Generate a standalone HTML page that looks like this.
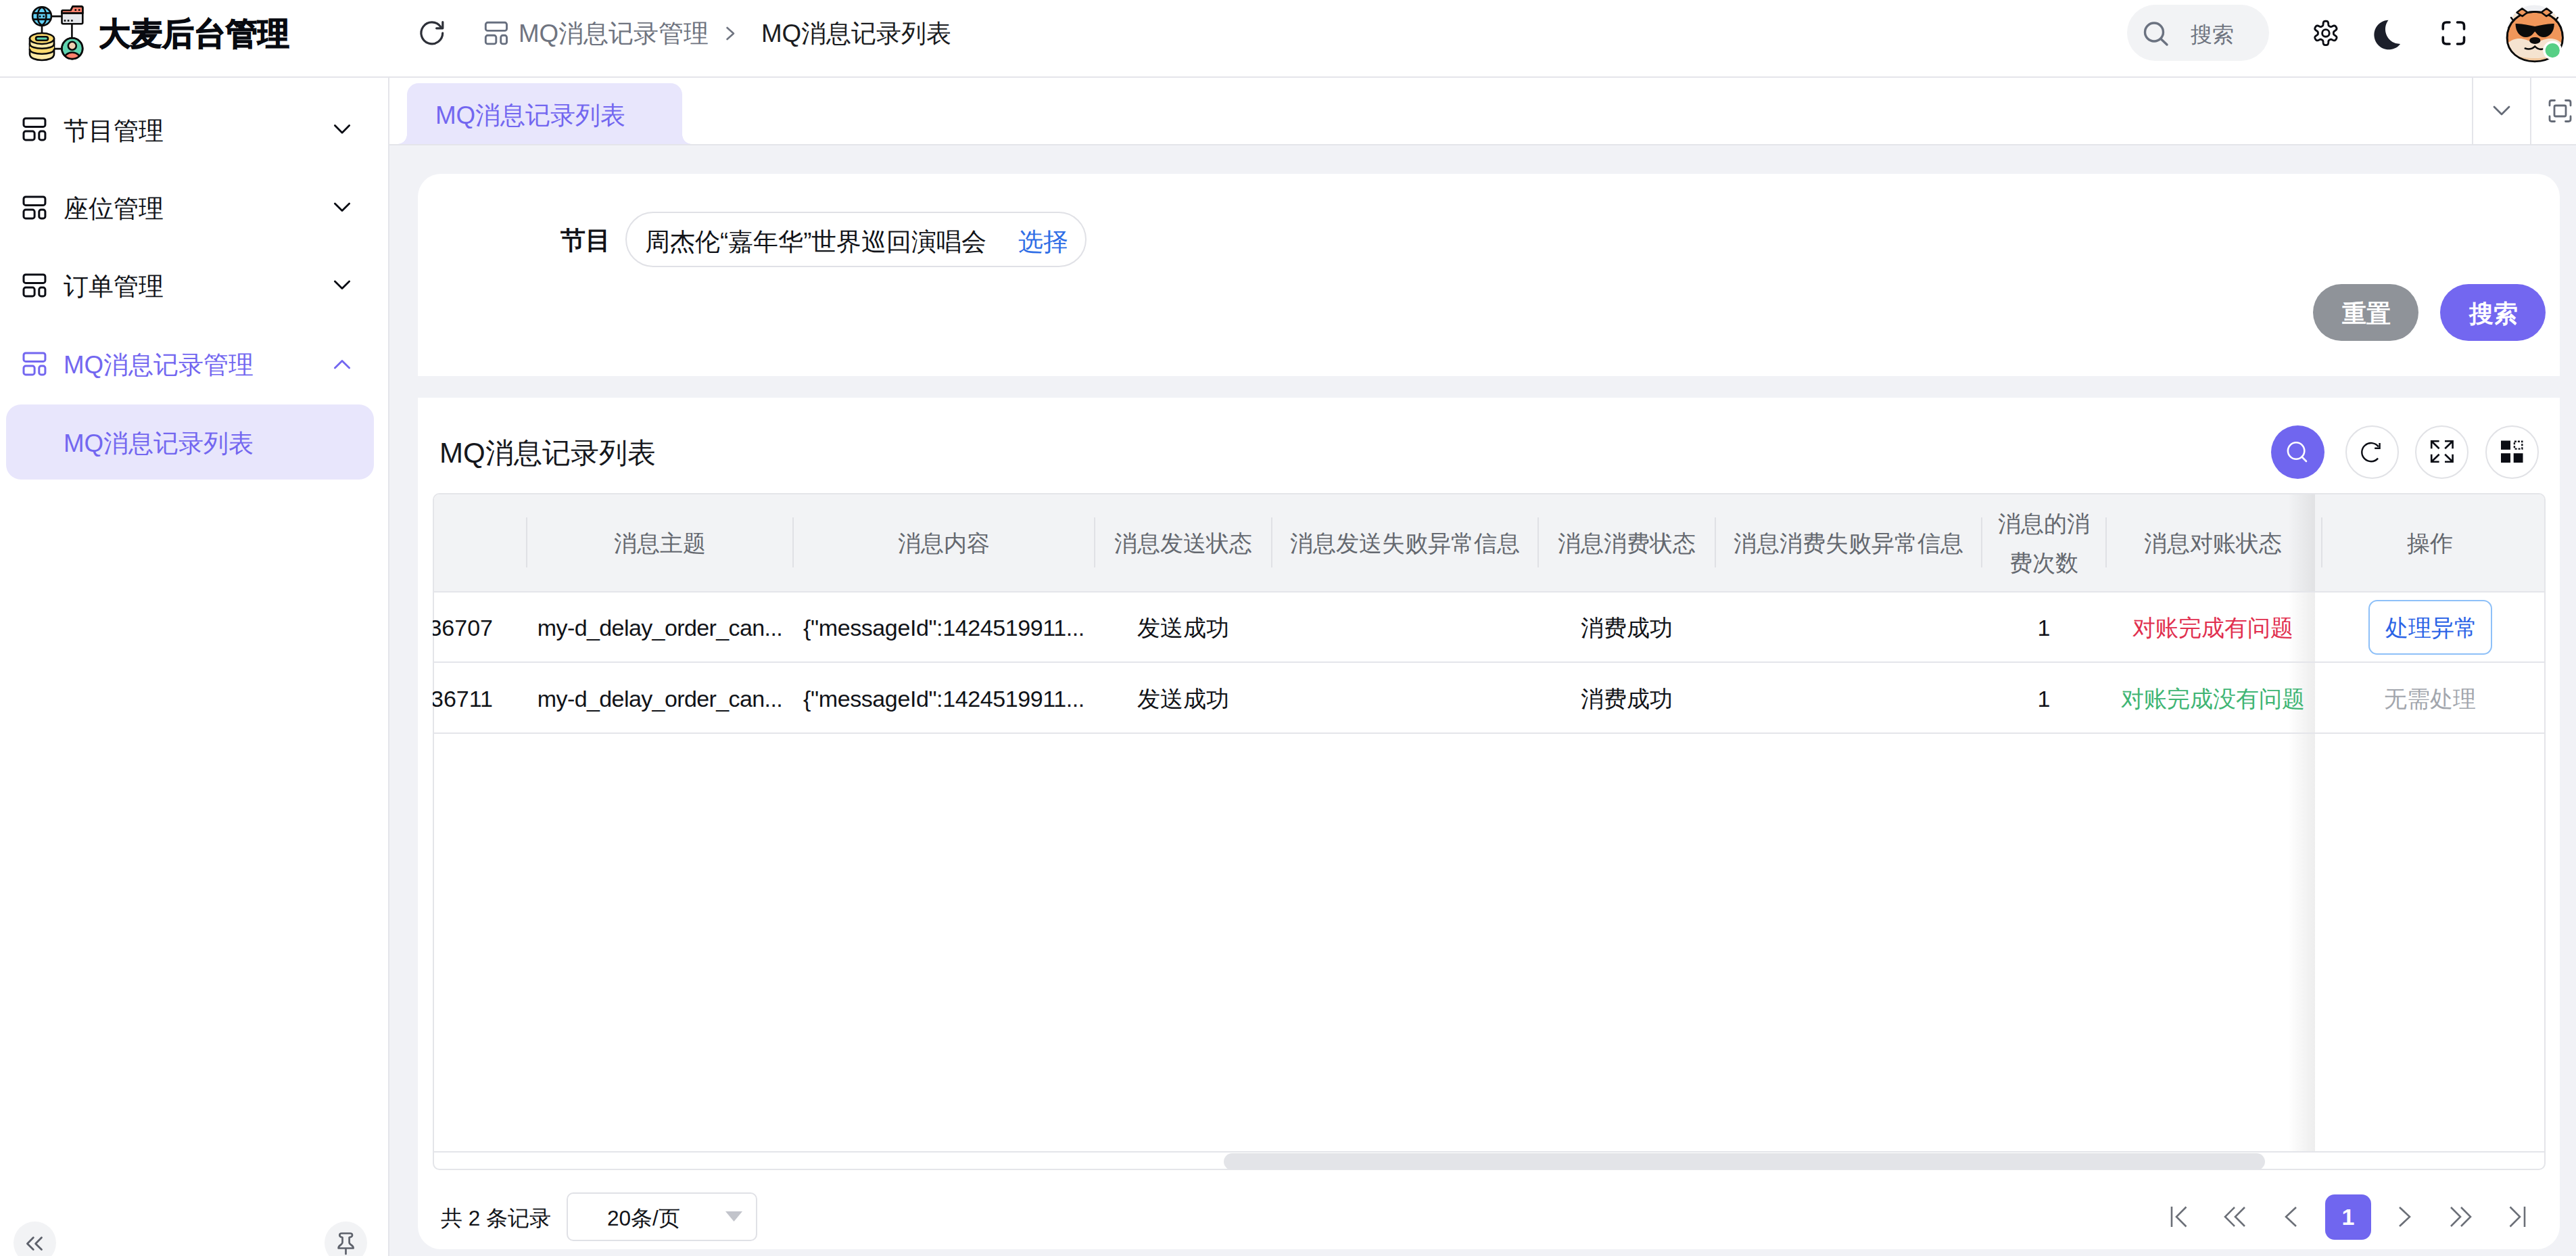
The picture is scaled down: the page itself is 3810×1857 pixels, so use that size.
<!DOCTYPE html>
<html><head><meta charset="utf-8">
<style>
*{box-sizing:border-box;margin:0;padding:0}
html,body{width:3810px;height:1857px;overflow:hidden;background:#f1f2f6;font-family:"Liberation Sans",sans-serif;color:#111318}
body{position:relative}
.a{position:absolute;white-space:nowrap}
svg{display:block}
.bg{background:#fff}
.line{background:#e4e5ea}
.t37{font-size:36.75px;line-height:44px}
.t34{font-size:34px;line-height:40px}
.pri{color:#7367f0}
#ov{position:absolute;left:0;top:0;width:3810px;height:1857px;pointer-events:none}
</style></head><body>
<!-- frame -->
<div class="a bg" style="left:0;top:0;width:3810px;height:113px"></div>
<div class="a line" style="left:0;top:113px;width:3810px;height:2px"></div>
<div class="a bg" style="left:0;top:115px;width:574px;height:1742px"></div>
<div class="a line" style="left:574px;top:115px;width:2px;height:1742px"></div>
<div class="a bg" style="left:576px;top:115px;width:3234px;height:98px"></div>
<div class="a line" style="left:576px;top:213px;width:3234px;height:2px"></div>

<!-- HEADER TEXT -->
<div class="a" style="left:146px;top:23px;font-size:47px;line-height:54px;font-weight:bold;color:#080a10;-webkit-text-stroke:1.3px #080a10">大麦后台管理</div>
<div class="a t37" style="left:767px;top:28px;color:#6f7480">MQ消息记录管理</div>
<div class="a t37" style="left:1126px;top:28px;color:#1a1c21">MQ消息记录列表</div>
<div class="a" style="left:3146px;top:7px;width:210px;height:83px;border-radius:42px;background:#f2f3f5"></div>
<div class="a" style="left:3240px;top:31px;font-size:31.5px;line-height:40px;color:#6f7480">搜索</div>

<!-- SIDER -->
<div class="a t37" style="left:94px;top:172px">节目管理</div>
<div class="a t37" style="left:94px;top:287px">座位管理</div>
<div class="a t37" style="left:94px;top:402px">订单管理</div>
<div class="a t37 pri" style="left:94px;top:518px">MQ消息记录管理</div>
<div class="a" style="left:9px;top:598px;width:544px;height:111px;border-radius:22px;background:#e8e6fc"></div>
<div class="a t37 pri" style="left:94px;top:634px">MQ消息记录列表</div>
<div class="a" style="left:20px;top:1806px;width:63px;height:63px;border-radius:50%;background:#f2f3f5"></div>
<div class="a" style="left:480px;top:1806px;width:63px;height:63px;border-radius:50%;background:#f2f3f5"></div>

<!-- TABS -->
<div class="a" style="left:602px;top:123px;width:407px;height:90px;border-radius:17px 17px 0 0;background:#e8e6fc"></div>
<div class="a" style="left:588px;top:199px;width:14px;height:14px;background:radial-gradient(circle at 0 0,transparent 13.5px,#e8e6fc 14px)"></div>
<div class="a" style="left:1009px;top:199px;width:14px;height:14px;background:radial-gradient(circle at 100% 0,transparent 13.5px,#e8e6fc 14px)"></div>
<div class="a t37 pri" style="left:644px;top:149px">MQ消息记录列表</div>
<div class="a line" style="left:3656px;top:115px;width:2px;height:98px"></div>
<div class="a line" style="left:3742px;top:115px;width:2px;height:98px"></div>

<!-- CARD 1 -->
<div class="a bg" style="left:618px;top:257px;width:3168px;height:299px;border-radius:34px 34px 0 0"></div>
<div class="a t37" style="left:829px;top:334px;font-weight:bold">节目</div>
<div class="a" style="left:925px;top:313px;width:682px;height:82px;border:2px solid #e0e1e6;border-radius:41px;background:#fff"></div>
<div class="a t37" style="left:954px;top:336px">周杰伦“嘉年华”世界巡回演唱会</div>
<div class="a t37" style="left:1506px;top:336px;color:#2f6ee6">选择</div>
<div class="a" style="left:3421px;top:420px;width:156px;height:84px;border-radius:42px;background:#8f9399"></div>
<div class="a" style="left:3464px;top:442px;font-size:35.5px;line-height:44px;color:#fff;font-weight:bold">重置</div>
<div class="a" style="left:3609px;top:420px;width:156px;height:84px;border-radius:42px;background:#7367f0"></div>
<div class="a" style="left:3652px;top:442px;font-size:35.5px;line-height:44px;color:#fff;font-weight:bold">搜索</div>

<!-- CARD 2 -->
<div class="a bg" style="left:618px;top:588px;width:3168px;height:1259px;border-radius:0 0 34px 34px"></div>

<div class="a" style="left:650px;top:645px;font-size:42px;line-height:50px;color:#15171c">MQ消息记录列表</div>
<div class="a" style="left:3359px;top:629px;width:79px;height:79px;border-radius:50%;background:#7066ef"></div>
<div class="a" style="left:3469px;top:629px;width:79px;height:79px;border-radius:50%;border:2px solid #e1e2e6"></div>
<div class="a" style="left:3572px;top:629px;width:79px;height:79px;border-radius:50%;border:2px solid #e1e2e6"></div>
<div class="a" style="left:3676px;top:629px;width:79px;height:79px;border-radius:50%;border:2px solid #e1e2e6"></div>

<!-- TABLE -->
<div class="a" id="tbl" style="left:640px;top:729px;width:3125px;height:1001px;border:2px solid #e4e5e9;border-radius:10px;overflow:hidden;background:#fff">
  <div class="a" style="left:0;top:0;width:3121px;height:143px;background:#f2f3f5"></div>
  <div class="a" style="left:2782px;top:0;width:339px;height:143px;background:#f2f3f5"></div>
  <div class="a bg" style="left:2782px;top:145px;width:339px;height:102px"></div>
  <div class="a bg" style="left:2782px;top:249px;width:339px;height:103px"></div>
  <div class="a bg" style="left:2782px;top:354px;width:339px;height:617px"></div>
  <div class="a" style="left:2742px;top:0;width:40px;height:971px;background:linear-gradient(to right,rgba(0,0,0,0),rgba(0,0,0,0.07))"></div>
  <div class="a line" style="left:0;top:143px;width:3121px;height:2px"></div>
  <div class="a line" style="left:0;top:247px;width:3121px;height:2px"></div>
  <div class="a line" style="left:0;top:352px;width:3121px;height:2px"></div>
  <div class="a line" style="left:0;top:971px;width:3121px;height:2px"></div>
  <div class="a" style="left:1168px;top:974px;width:1540px;height:25px;border-radius:12.5px;background:#e3e4e8"></div>
</div>
<div class="a" style="left:778px;top:765px;width:2px;height:74px;background:#e0e1e5"></div>
<div class="a" style="left:1172px;top:765px;width:2px;height:74px;background:#e0e1e5"></div>
<div class="a" style="left:1618px;top:765px;width:2px;height:74px;background:#e0e1e5"></div>
<div class="a" style="left:1880px;top:765px;width:2px;height:74px;background:#e0e1e5"></div>
<div class="a" style="left:2274px;top:765px;width:2px;height:74px;background:#e0e1e5"></div>
<div class="a" style="left:2536px;top:765px;width:2px;height:74px;background:#e0e1e5"></div>
<div class="a" style="left:2930px;top:765px;width:2px;height:74px;background:#e0e1e5"></div>
<div class="a" style="left:3114px;top:765px;width:2px;height:74px;background:#e0e1e5"></div>
<div class="a" style="left:3433px;top:765px;width:2px;height:74px;background:#e0e1e5"></div>
<div class="a t34" style="left:976px;top:783px;width:600px;margin-left:-300px;text-align:center;color:#64686f">消息主题</div>
<div class="a t34" style="left:1396px;top:783px;width:600px;margin-left:-300px;text-align:center;color:#64686f">消息内容</div>
<div class="a t34" style="left:1750px;top:783px;width:600px;margin-left:-300px;text-align:center;color:#64686f">消息发送状态</div>
<div class="a t34" style="left:2078px;top:783px;width:600px;margin-left:-300px;text-align:center;color:#64686f">消息发送失败异常信息</div>
<div class="a t34" style="left:2406px;top:783px;width:600px;margin-left:-300px;text-align:center;color:#64686f">消息消费状态</div>
<div class="a t34" style="left:2734px;top:783px;width:600px;margin-left:-300px;text-align:center;color:#64686f">消息消费失败异常信息</div>
<div class="a t34" style="left:3273px;top:783px;width:600px;margin-left:-300px;text-align:center;color:#64686f">消息对账状态</div>
<div class="a t34" style="left:3594px;top:783px;width:600px;margin-left:-300px;text-align:center;color:#64686f">操作</div>
<div class="a t34" style="left:3023px;top:745px;width:600px;margin-left:-300px;text-align:center;color:#64686f;line-height:58px">消息的消<br>费次数</div>
<div class="a t34" style="left:640px;top:908px;width:89px;overflow:hidden;direction:rtl;text-align:right">36707</div>
<div class="a t34" style="left:976px;top:908px;width:600px;margin-left:-300px;text-align:center;letter-spacing:-0.6px">my-d_delay_order_can...</div>
<div class="a t34" style="left:1396px;top:908px;width:600px;margin-left:-300px;text-align:center;letter-spacing:-0.4px">{"messageId":1424519911...</div>
<div class="a t34" style="left:1750px;top:908px;width:600px;margin-left:-300px;text-align:center">发送成功</div>
<div class="a t34" style="left:2406px;top:908px;width:600px;margin-left:-300px;text-align:center">消费成功</div>
<div class="a t34" style="left:3023px;top:908px;width:600px;margin-left:-300px;text-align:center">1</div>
<div class="a t34" style="left:640px;top:1013px;width:89px;overflow:hidden;direction:rtl;text-align:right">36711</div>
<div class="a t34" style="left:976px;top:1013px;width:600px;margin-left:-300px;text-align:center;letter-spacing:-0.6px">my-d_delay_order_can...</div>
<div class="a t34" style="left:1396px;top:1013px;width:600px;margin-left:-300px;text-align:center;letter-spacing:-0.4px">{"messageId":1424519911...</div>
<div class="a t34" style="left:1750px;top:1013px;width:600px;margin-left:-300px;text-align:center">发送成功</div>
<div class="a t34" style="left:2406px;top:1013px;width:600px;margin-left:-300px;text-align:center">消费成功</div>
<div class="a t34" style="left:3023px;top:1013px;width:600px;margin-left:-300px;text-align:center">1</div>
<div class="a t34" style="left:3273px;top:908px;width:600px;margin-left:-300px;text-align:center;color:#e1304f">对账完成有问题</div>
<div class="a t34" style="left:3273px;top:1013px;width:600px;margin-left:-300px;text-align:center;color:#3fb574">对账完成没有问题</div>
<div class="a" style="left:3503px;top:887px;width:183px;height:81px;border:2px solid #8ec0f8;border-radius:13px"></div>
<div class="a t34" style="left:3596px;top:908px;width:600px;margin-left:-300px;text-align:center;color:#2b63e6">处理异常</div>
<div class="a t34" style="left:3594px;top:1013px;width:600px;margin-left:-300px;text-align:center;color:#a2a6ad">无需处理</div>
<div class="a" style="left:652px;top:1781px;font-size:31.5px;line-height:40px">共 2 条记录</div>
<div class="a" style="left:838px;top:1763px;width:282px;height:72px;border:2px solid #e0e1e6;border-radius:10px"></div>
<div class="a" style="left:898px;top:1781px;font-size:31.5px;line-height:40px">20条/页</div>
<div class="a" style="left:3439px;top:1766px;width:68px;height:67px;border-radius:14px;background:#7066ef"></div>
<div class="a" style="left:3439px;top:1779px;width:68px;text-align:center;font-size:34px;line-height:40px;color:#fff;font-weight:bold">1</div>


<svg id="ov" viewBox="0 0 3810 1857">
<!-- LOGO -->
<g transform="translate(38,4)" stroke="#0b0b0b" stroke-width="2.6" stroke-linejoin="round" stroke-linecap="round">
  <line x1="37" y1="20.1" x2="54" y2="20.1"/>
  <line x1="24" y1="34" x2="24" y2="45"/>
  <line x1="68.4" y1="31" x2="68.4" y2="53"/>
  <line x1="42" y1="68.1" x2="53" y2="68.1"/>
  <circle cx="24" cy="20.1" r="13.9" fill="#62cff4"/>
  <path d="M24 6.5 C15.5 11.5 15.5 28.5 24 33.7 C32.5 28.5 32.5 11.5 24 6.5Z" fill="none"/>
  <line x1="11" y1="15.4" x2="37" y2="15.4"/>
  <line x1="11" y1="24.6" x2="37" y2="24.6"/>
  <rect x="19.8" y="18.9" width="2.6" height="2.6" fill="#0b0b0b" stroke="none"/>
  <rect x="25.3" y="18.9" width="2.6" height="2.6" fill="#0b0b0b" stroke="none"/>
  <path d="M55.5 11.3 H66.6 L69.5 5.6 H82.3 Q84.3 5.6 84.3 7.6 V29.3 Q84.3 31.3 82.3 31.3 H55.5 Q53.5 31.3 53.5 29.3 V13.3 Q53.5 11.3 55.5 11.3Z" fill="#e5e7eb"/>
  <path d="M53.5 15.4 V13.3 Q53.5 11.3 55.5 11.3 H66.6 L69.5 5.6 H82.3 Q84.3 5.6 84.3 7.6 V15.4Z" fill="#ff826e"/>
  <line x1="53.5" y1="15.4" x2="84.3" y2="15.4"/>
  <rect x="72.5" y="9.4" width="2.6" height="2.6" fill="#0b0b0b" stroke="none"/>
  <rect x="77.9" y="9.4" width="2.6" height="2.6" fill="#0b0b0b" stroke="none"/>
  <rect x="56.7" y="25.2" width="2.6" height="2.6" fill="#0b0b0b" stroke="none"/>
  <rect x="61.8" y="25.2" width="2.6" height="2.6" fill="#0b0b0b" stroke="none"/>
  <rect x="67.1" y="25.2" width="2.6" height="2.6" fill="#0b0b0b" stroke="none"/>
  <path d="M6 53 V76 C6 88 42 88 42 76 V53Z" fill="#fde9a6"/>
  <path d="M6 61 C6 70 42 70 42 61 V69 C42 78 6 78 6 69Z" fill="#fcd96e" stroke="none"/>
  <path d="M6 61 C6 70 42 70 42 61 M6 69 C6 78 42 78 42 69" fill="none"/>
  <ellipse cx="24" cy="53" rx="18" ry="8" fill="#fcd96e"/>
  <rect x="15" y="50.2" width="18" height="5.6" rx="2.8" fill="#5fd4b0"/>
  <circle cx="68.8" cy="67.7" r="15.4" fill="#5fd4b0"/>
  <clipPath id="lgc"><circle cx="68.8" cy="67.7" r="15.4"/></clipPath>
  <ellipse cx="68.8" cy="84.5" rx="12.5" ry="11" fill="#ff826e" clip-path="url(#lgc)"/>
  <circle cx="68.8" cy="67.7" r="15.4" fill="none"/>
  <circle cx="68.8" cy="63.8" r="6" fill="#f0d0b2"/>
</g>
<!-- header refresh -->
<path d="M654.7 48.8 A15.9 15.9 0 1 1 651.8 39.7" fill="none" stroke="#2d3038" stroke-width="3.2" stroke-linecap="round"/>
<path d="M654.8 32.6 V41.8 H645.6" fill="none" stroke="#2d3038" stroke-width="3.2" stroke-linecap="round" stroke-linejoin="round"/>
<!-- breadcrumb icon -->
<g fill="none" stroke="#676f7f" stroke-width="2.9">
  <rect x="718.3" y="33.3" width="31.2" height="12.1" rx="3"/>
  <rect x="718.3" y="52.3" width="15.5" height="12.6" rx="3"/>
  <rect x="740.7" y="52.3" width="8.8" height="12.6" rx="3"/>
</g>
<path d="M1075.5 41 L1085 49.5 L1075.5 58" fill="none" stroke="#6f7480" stroke-width="2.6" stroke-linecap="round" stroke-linejoin="round"/>
<!-- search pill icon -->
<circle cx="3186" cy="47.5" r="13.5" fill="none" stroke="#6b7280" stroke-width="3.4"/>
<line x1="3196" y1="57.5" x2="3205" y2="66" stroke="#6b7280" stroke-width="3.4" stroke-linecap="round"/>
<!-- gear -->
<path d="M3439.90 31.20 L3440.36 31.21 L3440.83 31.25 L3441.28 31.32 L3441.74 31.42 L3442.18 31.59 L3442.60 31.86 L3442.98 32.27 L3443.30 32.89 L3443.54 33.76 L3443.68 34.80 L3443.77 35.84 L3443.87 36.70 L3444.00 37.32 L3444.18 37.75 L3444.39 38.05 L3444.63 38.28 L3444.88 38.46 L3445.13 38.63 L3445.39 38.79 L3445.65 38.94 L3445.91 39.09 L3446.18 39.23 L3446.45 39.37 L3446.73 39.49 L3447.05 39.58 L3447.42 39.62 L3447.88 39.56 L3448.49 39.36 L3449.28 39.02 L3450.22 38.58 L3451.20 38.18 L3452.06 37.95 L3452.76 37.91 L3453.31 38.04 L3453.75 38.27 L3454.12 38.57 L3454.44 38.91 L3454.72 39.27 L3454.99 39.65 L3455.23 40.05 L3455.45 40.46 L3455.65 40.88 L3455.82 41.31 L3455.95 41.75 L3456.03 42.22 L3456.01 42.72 L3455.85 43.25 L3455.47 43.84 L3454.83 44.48 L3454.00 45.12 L3453.15 45.72 L3452.45 46.23 L3451.98 46.66 L3451.70 47.03 L3451.54 47.37 L3451.46 47.68 L3451.43 47.99 L3451.41 48.30 L3451.40 48.60 L3451.40 48.90 L3451.40 49.20 L3451.41 49.50 L3451.43 49.81 L3451.46 50.12 L3451.54 50.43 L3451.70 50.77 L3451.98 51.14 L3452.45 51.57 L3453.15 52.08 L3454.00 52.68 L3454.83 53.32 L3455.47 53.96 L3455.85 54.55 L3456.01 55.08 L3456.03 55.58 L3455.95 56.05 L3455.82 56.49 L3455.65 56.92 L3455.45 57.34 L3455.23 57.75 L3454.99 58.15 L3454.72 58.53 L3454.44 58.89 L3454.12 59.23 L3453.75 59.53 L3453.31 59.76 L3452.76 59.89 L3452.06 59.85 L3451.20 59.62 L3450.22 59.22 L3449.28 58.78 L3448.49 58.44 L3447.88 58.24 L3447.42 58.18 L3447.05 58.22 L3446.73 58.31 L3446.45 58.43 L3446.18 58.57 L3445.91 58.71 L3445.65 58.86 L3445.39 59.01 L3445.13 59.17 L3444.88 59.34 L3444.63 59.52 L3444.39 59.75 L3444.18 60.05 L3444.00 60.48 L3443.87 61.10 L3443.77 61.96 L3443.68 63.00 L3443.54 64.04 L3443.30 64.91 L3442.98 65.53 L3442.60 65.94 L3442.18 66.21 L3441.74 66.38 L3441.28 66.48 L3440.83 66.55 L3440.36 66.59 L3439.90 66.60 L3439.44 66.59 L3438.97 66.55 L3438.52 66.48 L3438.06 66.38 L3437.62 66.21 L3437.20 65.94 L3436.82 65.53 L3436.50 64.91 L3436.26 64.04 L3436.12 63.00 L3436.03 61.96 L3435.93 61.10 L3435.80 60.48 L3435.62 60.05 L3435.41 59.75 L3435.17 59.52 L3434.92 59.34 L3434.67 59.17 L3434.41 59.01 L3434.15 58.86 L3433.89 58.71 L3433.62 58.57 L3433.35 58.43 L3433.07 58.31 L3432.75 58.22 L3432.38 58.18 L3431.92 58.24 L3431.31 58.44 L3430.52 58.78 L3429.58 59.22 L3428.60 59.62 L3427.74 59.85 L3427.04 59.89 L3426.49 59.76 L3426.05 59.53 L3425.68 59.23 L3425.36 58.89 L3425.08 58.53 L3424.81 58.15 L3424.57 57.75 L3424.35 57.34 L3424.15 56.92 L3423.98 56.49 L3423.85 56.05 L3423.77 55.58 L3423.79 55.08 L3423.95 54.55 L3424.33 53.96 L3424.97 53.32 L3425.80 52.68 L3426.65 52.08 L3427.35 51.57 L3427.82 51.14 L3428.10 50.77 L3428.26 50.43 L3428.34 50.12 L3428.37 49.81 L3428.39 49.50 L3428.40 49.20 L3428.40 48.90 L3428.40 48.60 L3428.39 48.30 L3428.37 47.99 L3428.34 47.68 L3428.26 47.37 L3428.10 47.03 L3427.82 46.66 L3427.35 46.23 L3426.65 45.72 L3425.80 45.12 L3424.97 44.48 L3424.33 43.84 L3423.95 43.25 L3423.79 42.72 L3423.77 42.22 L3423.85 41.75 L3423.98 41.31 L3424.15 40.88 L3424.35 40.46 L3424.57 40.05 L3424.81 39.65 L3425.08 39.27 L3425.36 38.91 L3425.68 38.57 L3426.05 38.27 L3426.49 38.04 L3427.04 37.91 L3427.74 37.95 L3428.60 38.18 L3429.58 38.58 L3430.52 39.02 L3431.31 39.36 L3431.92 39.56 L3432.38 39.62 L3432.75 39.58 L3433.07 39.49 L3433.35 39.37 L3433.62 39.23 L3433.89 39.09 L3434.15 38.94 L3434.41 38.79 L3434.67 38.63 L3434.92 38.46 L3435.17 38.28 L3435.41 38.05 L3435.62 37.75 L3435.80 37.32 L3435.93 36.70 L3436.03 35.84 L3436.12 34.80 L3436.26 33.76 L3436.50 32.89 L3436.82 32.27 L3437.20 31.86 L3437.62 31.59 L3438.06 31.42 L3438.52 31.32 L3438.97 31.25 L3439.44 31.21Z" fill="none" stroke="#0b0d14" stroke-width="2.9" stroke-linejoin="round"/>
<circle cx="3439.9" cy="48.9" r="5.3" fill="none" stroke="#0b0d14" stroke-width="2.9"/>
<!-- moon -->
<path d="M3532.5 29.7 A21.8 21.8 0 1 0 3550.2 65.1 A22 22 0 0 1 3532.5 29.7Z" fill="#1c1f2a"/>
<!-- fullscreen -->
<g fill="none" stroke="#0b0d14" stroke-width="3.6" stroke-linecap="round" stroke-linejoin="round">
<path d="M3613.3 43 V38 Q3613.3 33 3618.3 33 H3623"/>
<path d="M3634.5 33 H3639.5 Q3644.5 33 3644.5 38 V43"/>
<path d="M3644.5 55 V60 Q3644.5 65 3639.5 65 H3634.5"/>
<path d="M3623 65 H3618.3 Q3613.3 65 3613.3 60 V55"/>
</g>
<!-- avatar -->
<g transform="translate(3700,2)">
  <circle cx="48.4" cy="46.3" r="40.8" fill="#eff0f3"/>
  <clipPath id="avc"><path d="M49 15.3 C72 15.3 90.5 31 90.5 54 C90.5 75 72 88.8 49 88.8 C26 88.8 8 75 8 54 C8 31 26 15.3 49 15.3Z M0 0 H97 V40 H0Z"/></clipPath>
  <g clip-path="url(#avc)">
  <path d="M14 30 L19 18 L27 22 L26 30Z M83 30 L78 18 L70 22 L71 30Z" fill="#f5e3d0"/>
  <path d="M14 24 L17 28 M83 24 L80 28" stroke="#0b0b0b" stroke-width="2.4" stroke-linecap="round"/>
  <path d="M49 15.3 C72 15.3 90.5 31 90.5 54 C90.5 75 72 88.8 49 88.8 C26 88.8 8 75 8 54 C8 31 26 15.3 49 15.3Z" fill="#f0965a" stroke="#0b0b0b" stroke-width="2.8"/>
  <path d="M9.5 62 C14 56 24 54 31 55.5 C38 57 44 60 49 62 C54 60 60 57 67 55.5 C74 54 84 56 88.5 62 C88 77 72 87.5 49 87.5 C26 87.5 10 77 9.5 62Z" fill="#f5e3d0"/>
  <path d="M12 75 C22 82 34 84 49 84 C64 84 76 82 86 75 C80 83 66 88 49 88 C32 88 18 83 12 75Z" fill="#f2c9a0"/>
  </g>
  <path d="M49 15.3 C72 15.3 90.5 31 90.5 54 C90.5 75 72 88.8 49 88.8 C26 88.8 8 75 8 54 C8 31 26 15.3 49 15.3Z" fill="none" stroke="#0b0b0b" stroke-width="2.8"/>
  <path d="M22.5 16.5 L30.3 10.5 L38.2 16.3 L30.6 22Z M74.3 16.5 L66.5 10.5 L58.6 16.3 L66.2 22Z" fill="#f0965a" stroke="#0b0b0b" stroke-width="2.6" stroke-linejoin="round"/>
  <path d="M20.5 33 C30 32.5 40 35.5 49.2 37 C58 35.5 68 32.5 77.8 33 C78 45 71 53 62 53 C54.5 53 52 47.5 49.2 44.6 C46.5 47.5 44 53 36 53 C27 53 20.5 45 20.5 33Z" fill="#0b0b0b"/>
  <ellipse cx="49.3" cy="57.9" rx="8.1" ry="5" fill="#0b0b0b"/>
  <path d="M34.8 69.6 Q43 72.5 49.2 66.6 Q55 72 60.5 70.5" fill="none" stroke="#0b0b0b" stroke-width="2.6" stroke-linecap="round"/>
  <circle cx="75.3" cy="72.6" r="14" fill="#fff"/>
  <circle cx="75.3" cy="72.6" r="10.6" fill="#57cf85"/>
</g>
<!-- sidebar icons -->
<g fill="none" stroke="#0b0d14" stroke-width="3">
  <g id="mi"><rect x="35" y="175" width="31.9" height="12.4" rx="3"/><rect x="35" y="194.1" width="16.1" height="12.8" rx="3"/><rect x="57.8" y="194.1" width="9.1" height="12.8" rx="3"/></g>
  <use href="#mi" y="116"/><use href="#mi" y="231"/>
</g>
<g fill="none" stroke="#7367f0" stroke-width="3"><use href="#mi" y="347"/></g>
<g fill="none" stroke-width="2.8" stroke-linecap="round" stroke-linejoin="round">
  <path d="M495.4 185.6 L506 196.2 L516.6 185.6" stroke="#0b0d14"/>
  <path d="M495.4 301 L506 311.6 L516.6 301" stroke="#0b0d14"/>
  <path d="M495.4 416 L506 426.6 L516.6 416" stroke="#0b0d14"/>
  <path d="M495.4 544 L506 533.4 L516.6 544" stroke="#7367f0"/>
</g>
<!-- sidebar bottom -->
<path d="M49.3 1829.7 L40.4 1838.7 L49.3 1847.6 M61.5 1829.7 L52.6 1838.7 L61.5 1847.6" fill="none" stroke="#5d616b" stroke-width="2.8" stroke-linecap="round" stroke-linejoin="round"/>
<path d="M506.5 1829.5 Q502.3 1829 502.3 1826.3 Q502.3 1823.5 505.3 1823.5 H518 Q521 1823.5 521 1826.3 Q521 1829 516.6 1829.5 V1836.8 Q516.6 1839 519.2 1840.5 Q522.6 1842.5 522.6 1845.5 H500.6 Q500.6 1842.5 504 1840.5 Q506.5 1839 506.5 1836.8Z M511.5 1846 V1854" fill="none" stroke="#5d616b" stroke-width="2.7" stroke-linecap="round" stroke-linejoin="round"/>
<!-- tab bar right icons -->
<path d="M3689 158 L3700 169 L3711 158" fill="none" stroke="#646a76" stroke-width="2.8" stroke-linecap="round" stroke-linejoin="round"/>
<g fill="none" stroke="#646a76" stroke-width="2.8" stroke-linecap="round" stroke-linejoin="round">
  <path d="M3771 156 V151.5 Q3771 148.5 3774 148.5 H3778.5"/>
  <path d="M3794.5 148.5 H3799 Q3802 148.5 3802 151.5 V156"/>
  <path d="M3802 172 V176.5 Q3802 179.5 3799 179.5 H3794.5"/>
  <path d="M3778.5 179.5 H3774 Q3771 179.5 3771 176.5 V172"/>
  <rect x="3778" y="156" width="17" height="16" rx="2"/>
</g>
<!-- toolbar icons -->
<circle cx="3396.1" cy="666.5" r="12.2" fill="none" stroke="#fff" stroke-width="2.6"/>
<line x1="3404.6" y1="675.5" x2="3411" y2="682" stroke="#fff" stroke-width="2.6" stroke-linecap="round"/>
<path d="M3517.1 677.6 A13.6 13.6 0 1 1 3517.8 660.5" fill="none" stroke="#0b0d14" stroke-width="2.4"/>
<path d="M3519.6 655 V662.7 H3512.2" fill="none" stroke="#0b0d14" stroke-width="2.4"/>
<g fill="none" stroke="#0b0d14" stroke-width="2.6">
  <path d="M3607.6 652.2 H3596.2 V663.2 M3596.2 652.2 L3607.6 663.2"/>
  <path d="M3616 652.2 H3627.6 V663.2 M3627.6 652.2 L3616.2 663.2"/>
  <path d="M3596.2 671.8 V682.8 H3607.6 M3596.2 682.8 L3607.6 671.8"/>
  <path d="M3627.6 671.8 V682.8 H3616 M3627.6 682.8 L3616.2 671.8"/>
</g>
<g fill="#0b0d14">
  <rect x="3699" y="651.5" width="14" height="13.3"/>
  <rect x="3699" y="670.2" width="14" height="13.8"/>
  <rect x="3717.7" y="670.2" width="13.8" height="13.8"/>
</g>
<rect x="3718.9" y="652.7" width="11.4" height="10.9" fill="none" stroke="#0b0d14" stroke-width="2.4" stroke-dasharray="3 2"/>
<!-- select triangle -->
<path d="M1073 1791 H1098 L1085.5 1806Z" fill="#c2c4cb"/>
<!-- pagination icons -->
<g fill="none" stroke="#6b6f77" stroke-width="2.6">
  <path d="M3212 1784 V1814 M3233.5 1784.5 L3219 1799 L3233.5 1813.5"/>
  <path d="M3305 1785 L3291 1799 L3305 1813 M3320 1785 L3306 1799 L3320 1813"/>
  <path d="M3396 1785 L3381 1799 L3396 1813"/>
  <path d="M3549 1785 L3564 1799 L3549 1813"/>
  <path d="M3625 1785 L3639 1799 L3625 1813 M3640 1785 L3654 1799 L3640 1813"/>
  <path d="M3734 1784 V1814 M3712.5 1784.5 L3727 1799 L3712.5 1813.5"/>
</g>
</svg>
</body></html>
